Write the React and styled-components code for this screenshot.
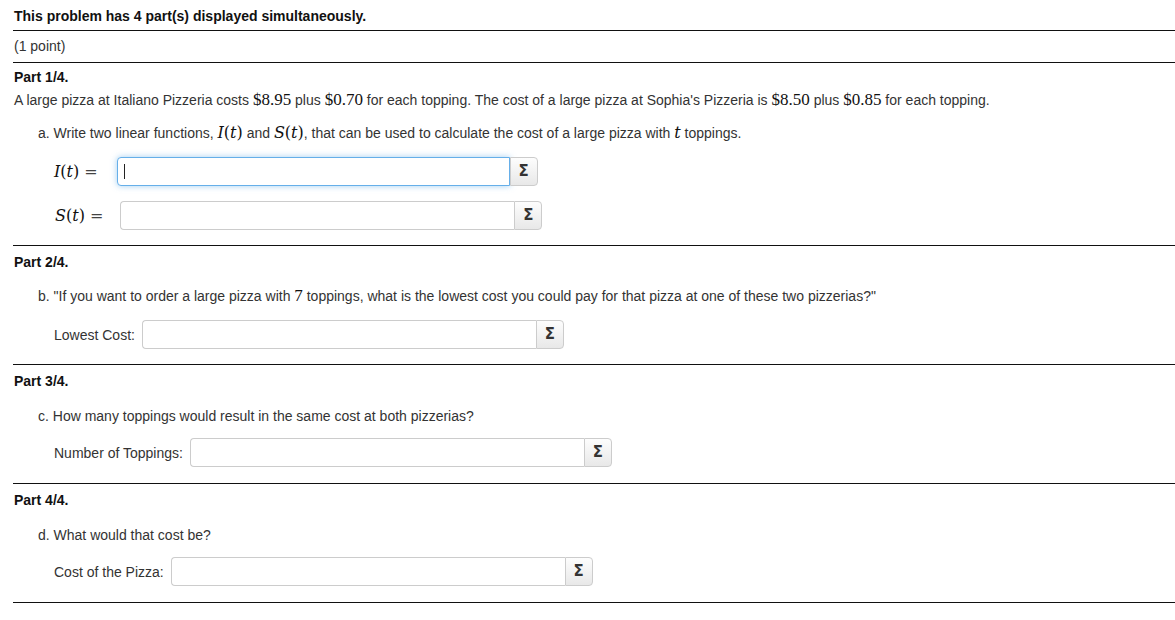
import React from "react";
import styled, { createGlobalStyle, css } from "styled-components";

const Global = createGlobalStyle`
  html, body { margin: 0; padding: 0; background: #fff; }
  body {
    font-family: "Liberation Sans", Arial, sans-serif;
    font-size: 14px;
    color: #333;
    overflow: hidden;
  }
`;

const Page = styled.div`
  margin-left: 13px;
`;

const Block = styled.div`
  border-bottom: 1px solid #111;
  padding: ${(p) => p.$pad || "0"};
`;

const Header = styled.div`
  font-weight: bold;
  color: #111;
  line-height: 15px;
  padding-left: 1px;
`;

const Plain = styled.div`
  line-height: 15px;
  padding-left: 1px;
`;

const PartTitle = styled.div`
  font-weight: bold;
  color: #111;
  line-height: 15px;
  padding-left: 1px;
`;

const Statement = styled.div`
  line-height: 17px;
  margin-top: 6px;
  padding-left: 1px;
`;

const Question = styled.div`
  line-height: 15px;
  margin-top: ${(p) => p.$mt || 18}px;
  padding-left: 25px;
`;

/* upright numbers in TeX-like serif */
const Num = styled.span`
  font-family: "Liberation Serif", "Times New Roman", serif;
  font-size: 17px;
  color: #111;
`;

/* italic variables, wider serif to match TeX metrics */
const Var = styled.span`
  font-family: "DejaVu Serif", "Liberation Serif", serif;
  font-size: 16px;
  color: #111;
  font-style: ${(p) => (p.$up ? "normal" : "italic")};
`;

const Row = styled.div`
  display: flex;
  align-items: center;
  margin-top: ${(p) => p.$mt}px;
  padding-left: 41px;
`;

const Label = styled.span`
  margin-right: 7px;
  white-space: nowrap;
`;

const MathLabel = styled.span`
  font-family: "DejaVu Serif", "Liberation Serif", serif;
  font-size: 16px;
  color: #111;
  white-space: nowrap;
  margin-right: ${(p) => p.$gap}px;
  margin-left: ${(p) => p.$ml || 0}px;
  i { font-style: italic; }
`;

const Eq = styled.span`
  color: #444;
  margin-left: 5px;
`;

const Field = styled.div`
  box-sizing: border-box;
  width: 394px;
  height: 29px;
  border: 1px solid #ccc;
  border-right: none;
  border-radius: 4px 0 0 4px;
  background: #fff;
  display: flex;
  align-items: center;
  padding-left: 6px;
  ${(p) =>
    p.$focused &&
    css`
      width: 393px;
      border: 1px solid #66afe9;
      box-shadow: 0 0 6px rgba(102, 175, 233, 0.6);
    `}
`;

const Caret = styled.span`
  display: block;
  width: 1px;
  height: 15px;
  background: #222;
`;

const SigmaButton = styled.button`
  box-sizing: border-box;
  width: 28px;
  height: 29px;
  margin: 0;
  padding: 0;
  border: 1px solid #ccc;
  border-radius: 0 4px 4px 0;
  background: linear-gradient(#fdfdfd, #e8e8e8);
  color: #333;
  font-family: "DejaVu Sans", "Liberation Sans", sans-serif;
  font-weight: bold;
  font-size: 15px;
  line-height: 1;
  display: flex;
  align-items: center;
  justify-content: center;
`;

function AnswerBox({ focused }) {
  return (
    <>
      <Field $focused={focused}>{focused && <Caret />}</Field>
      <SigmaButton>Σ</SigmaButton>
    </>
  );
}

export default function App() {
  return (
    <Page>
      <Global />
      <Block $pad="9px 0 6px">
        <Header>This problem has 4 part(s) displayed simultaneously.</Header>
      </Block>
      <Block $pad="8px 0 8px">
        <Plain>(1 point)</Plain>
      </Block>

      <Block $pad="7px 0 15px">
        <PartTitle>Part 1/4.</PartTitle>
        <Statement>
          A large pizza at Italiano Pizzeria costs <Num>$8.95</Num> plus <Num>$0.70</Num> for
          each topping. The cost of a large pizza at Sophia's Pizzeria is <Num>$8.50</Num> plus{" "}
          <Num>$0.85</Num> for each topping.
        </Statement>
        <Question $mt={16}>
          a. Write two linear functions, <Var>I</Var>
          <Var $up>(</Var>
          <Var>t</Var>
          <Var $up>)</Var> and <Var>S</Var>
          <Var $up>(</Var>
          <Var>t</Var>
          <Var $up>)</Var>, that can be used to calculate the cost of a large pizza with{" "}
          <Var>t</Var> toppings.
        </Question>
        <Row $mt={16}>
          <MathLabel $gap={19}>
            <i>I</i>(<i>t</i>)<Eq>=</Eq>
          </MathLabel>
          <AnswerBox focused />
        </Row>
        <Row $mt={15}>
          <MathLabel $gap={17} $ml={1}>
            <i>S</i>(<i>t</i>)<Eq>=</Eq>
          </MathLabel>
          <AnswerBox />
        </Row>
      </Block>

      <Block $pad="9px 0 15px">
        <PartTitle>Part 2/4.</PartTitle>
        <Question $mt={18}>
          b. "If you want to order a large pizza with <Num>7</Num> toppings, what is the lowest
          cost you could pay for that pizza at one of these two pizzerias?"
        </Question>
        <Row $mt={16}>
          <Label>Lowest Cost:</Label>
          <AnswerBox />
        </Row>
      </Block>

      <Block $pad="9px 0 16px">
        <PartTitle>Part 3/4.</PartTitle>
        <Question $mt={20}>c. How many toppings would result in the same cost at both pizzerias?</Question>
        <Row $mt={14}>
          <Label>Number of Toppings:</Label>
          <AnswerBox />
        </Row>
      </Block>

      <Block $pad="9px 0 16px">
        <PartTitle>Part 4/4.</PartTitle>
        <Question $mt={20}>d. What would that cost be?</Question>
        <Row $mt={14}>
          <Label>Cost of the Pizza:</Label>
          <AnswerBox />
        </Row>
      </Block>
    </Page>
  );
}
